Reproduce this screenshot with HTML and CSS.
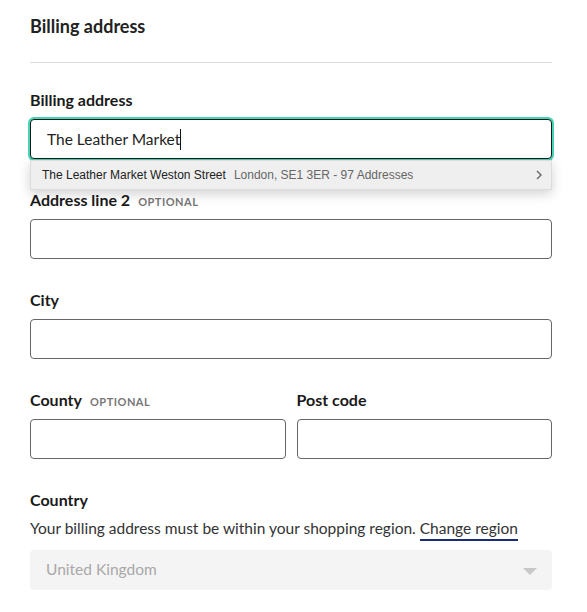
FILE: index.html
```html
<!DOCTYPE html>
<html lang="en">
<head>
  <meta charset="UTF-8" />
  <title>Billing address</title>
  <meta name="viewport" content="width=device-width, initial-scale=1.0" />
  <link rel="stylesheet" href="styles.css">
</head>
<body>
  <div class="form">
    <h2 class="section-title">Billing address</h2>
    <hr class="divider" />

    <div class="field">
      <label class="label" for="billing">Billing address</label>
      <div class="lookup">
        <div class="input focused" id="billing"><span class="value">The Leather Market</span><span class="caret"></span></div>
        <div class="suggestions">
          <div class="suggestion">
            <span class="main">The Leather Market Weston Street</span>
            <span class="sub">London, SE1 3ER - 97 Addresses</span>
            <svg class="chevron" width="8" height="12" viewBox="0 0 8 12"><path d="M2 2 L6 6 L2 10" fill="none" stroke="#666" stroke-width="1.4"/></svg>
          </div>
        </div>
      </div>
    </div>

    <div class="field">
      <label class="label">Address line 2 <span class="optional">OPTIONAL</span></label>
      <div class="input"></div>
    </div>

    <div class="field">
      <label class="label">City</label>
      <div class="input"></div>
    </div>

    <div class="row">
      <div class="field">
        <label class="label">County <span class="optional">OPTIONAL</span></label>
        <div class="input"></div>
      </div>
      <div class="field">
        <label class="label">Post code</label>
        <div class="input"></div>
      </div>
    </div>

    <div class="field">
      <label class="label">Country</label>
      <p class="hint">Your billing address must be within your shopping region. <a href="#" class="link">Change region</a></p>
      <div class="select">
        <span>United Kingdom</span>
        <svg class="arrow" width="14" height="8" viewBox="0 0 14 8"><path d="M0 0 H14 L7 7 Z" fill="#c8c8c8"/></svg>
      </div>
    </div>
  </div>
</body>
</html>
```

FILE: styles.css
```css
body {
  margin: 0;
  background: #fff;
  color: #1c1c1c;
  font-family: Lato, "Noto Sans", sans-serif;
}

.form {
  width: 522px;
  padding: 14px 30px 0 30px;
}

.section-title {
  font-size: 18px;
  font-weight: 700;
  line-height: 24px;
  margin: 0;
  color: #222;
}

.divider {
  border: none;
  border-top: 1px solid #dcdcdc;
  margin: 24px 0 27px 0;
}

.field {
  margin-bottom: 31px;
}

.label {
  display: flex;
  align-items: baseline;
  gap: 8px;
  height: 20px;
  font-size: 16px;
  font-weight: 700;
  line-height: 20px;
  margin-bottom: 9px;
  color: #1a1a1a;
}

.optional {
  font-size: 11px;
  font-weight: 700;
  color: #777;
  letter-spacing: 0.5px;
}

.input {
  box-sizing: border-box;
  height: 40px;
  border: 1px solid #666;
  border-radius: 4px;
  background: #fff;
  display: flex;
  align-items: center;
  padding: 0 16px;
  font-size: 15.5px;
}

.input.focused {
  border: 1px solid #1a1a1a;
  box-shadow: 0 0 0 2px #46d3b5;
}

.value { color: #222; }

.caret {
  display: inline-block;
  width: 1px;
  height: 21px;
  background: #111;
}

.lookup {
  position: relative;
}

.suggestions {
  position: absolute;
  top: 41px;
  left: 0;
  right: 0;
  background: #efefef;
  border: 1px solid #dcdcdc;
  box-shadow: 0 4px 12px rgba(0, 0, 0, 0.18);
  z-index: 5;
}

.suggestion {
  display: flex;
  align-items: center;
  height: 28px;
  padding: 0 8px 0 11px;
  font-family: "Liberation Sans", Arial, sans-serif;
  font-size: 12px;
}

.suggestion .main { color: #222; }
.suggestion .sub { color: #666; margin-left: 8px; }
.suggestion .chevron { margin-left: auto; }

.row {
  display: flex;
  gap: 11px;
}

.row .field { flex: 1; }

.hint {
  margin: -2px 0 11px 0;
  font-size: 15.5px;
  line-height: 22px;
  color: #333;
}

.link {
  color: #333;
  text-decoration: none;
  border-bottom: 2px solid #1b2b78;
  padding-bottom: 2px;
}

.select {
  box-sizing: border-box;
  height: 40px;
  background: #f4f4f4;
  border-radius: 4px;
  display: flex;
  align-items: center;
  justify-content: space-between;
  padding: 0 15px 3px 16px;
  font-size: 15.5px;
  color: #a8a8a8;
}

.arrow { margin-top: 6px; }
```
